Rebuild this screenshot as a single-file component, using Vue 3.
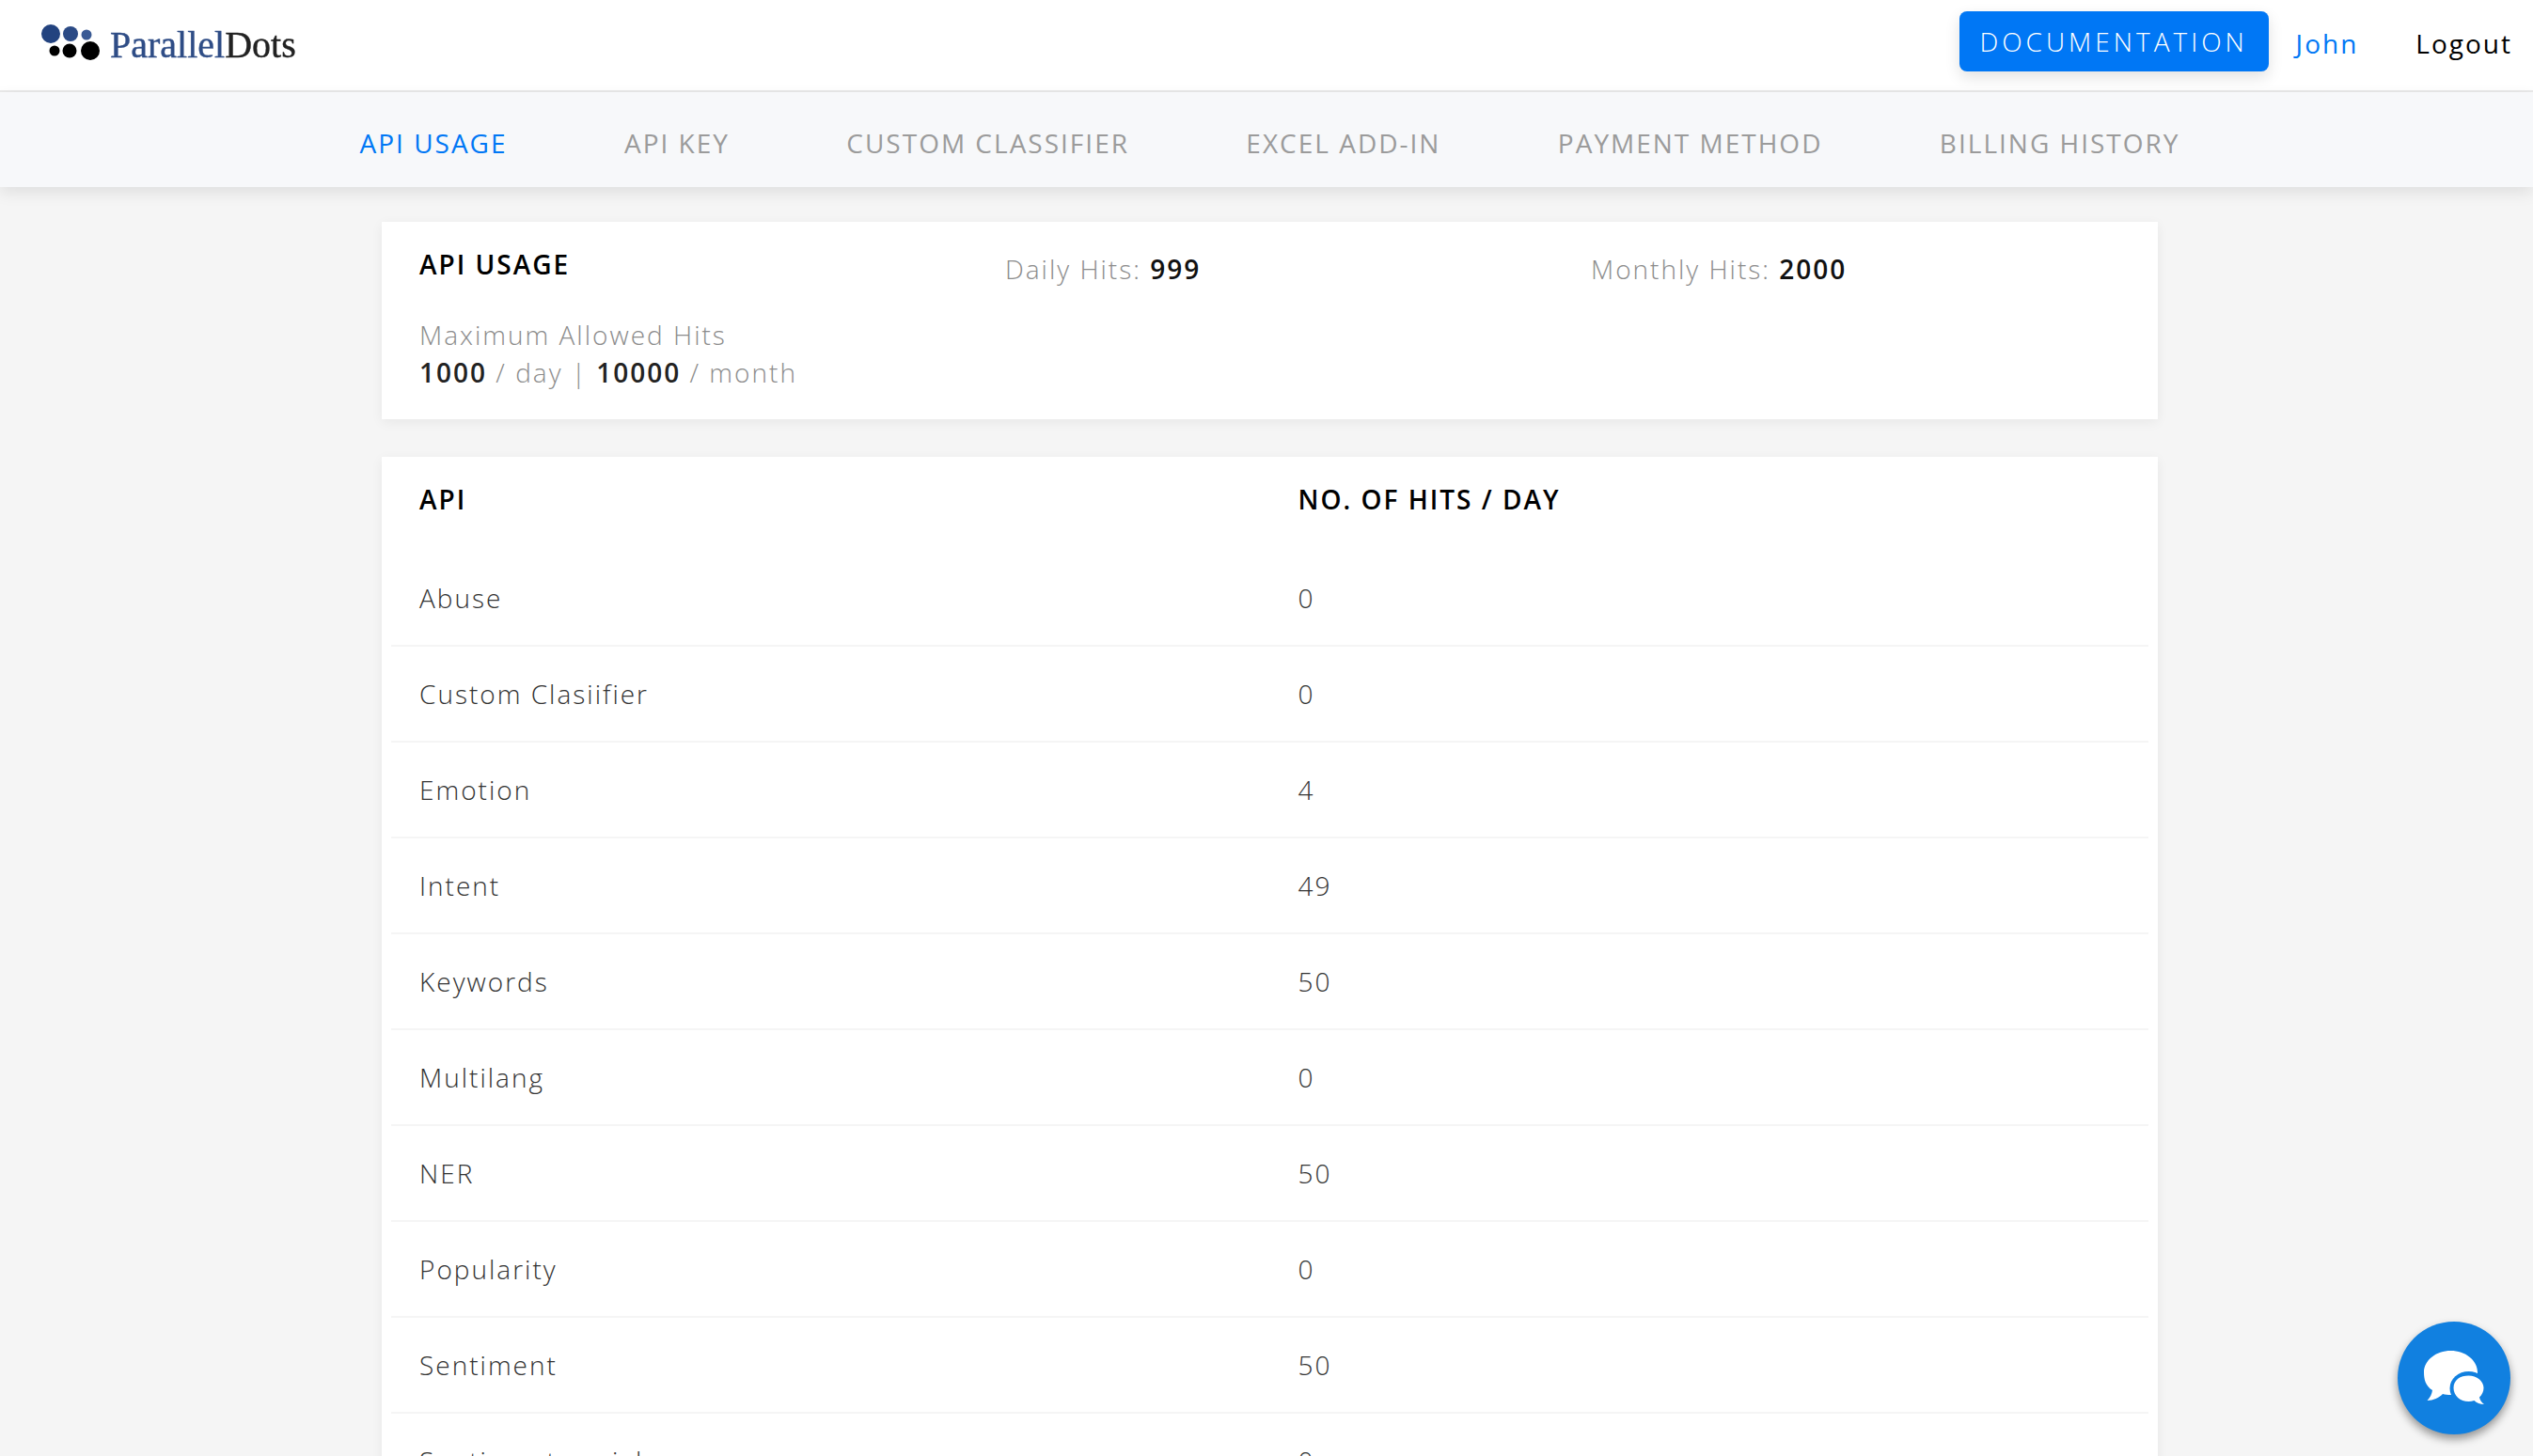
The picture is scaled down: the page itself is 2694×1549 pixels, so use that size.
<template>
  <div class="page">
    <!-- top bar -->
    <header class="topbar">
      <a class="logo">
        <svg class="logo-dots" width="72" height="46" viewBox="0 0 72 46">
          <circle cx="12" cy="11" r="10" fill="#23437f" />
          <circle cx="33" cy="11" r="8" fill="#2b4a85" />
          <circle cx="50" cy="12" r="5.5" fill="#3a5a94" />
          <circle cx="16" cy="29" r="5.5" fill="#000" />
          <circle cx="32" cy="29" r="7.5" fill="#000" />
          <circle cx="54" cy="29" r="10" fill="#000" />
        </svg>
        <span class="logo-text"><span class="logo-blue">Parallel</span>Dots</span>
      </a>
      <div class="topbar-right">
        <button class="doc-btn">DOCUMENTATION</button>
        <span class="user">John</span>
        <span class="logout">Logout</span>
      </div>
    </header>

    <!-- tabs -->
    <nav class="tabs">
      <span
        v-for="(tab, index) in tabs"
        :key="tab"
        class="tab"
        :class="{ active: index === 0 }"
      >{{ tab }}</span>
    </nav>

    <main class="content">
      <!-- usage summary -->
      <section class="card summary">
        <div class="summary-top">
          <h2 class="title">API USAGE</h2>
          <div class="hits">Daily Hits: <b>999</b></div>
          <div class="hits">Monthly Hits: <b>2000</b></div>
        </div>
        <div class="allowed">
          <div>Maximum Allowed Hits</div>
          <div><b>1000</b> / day | <b>10000</b> / month</div>
        </div>
      </section>

      <!-- hits per api -->
      <section class="card table">
        <div class="row head">
          <div class="cell">API</div>
          <div class="cell">NO. OF HITS / DAY</div>
        </div>
        <div v-for="api in apis" :key="api.name" class="row">
          <div class="cell">{{ api.name }}</div>
          <div class="cell">{{ api.hits }}</div>
        </div>
      </section>
    </main>

    <button class="chat">
      <svg width="120" height="120" viewBox="0 0 120 120">
        <path
          d="M56.500 31C72 31 85 41 85 54c0 13-13 24-28.500 24-3 0-6-.4-8.500-1-4 4-10 7-16.500 7 3-3 5-7 5.500-11C29.500 68.500 28 61 28 54c0-13 13-23 28.500-23z"
          fill="#fff"
        />
        <ellipse cx="75.500" cy="71" rx="20" ry="18" fill="#1180e0" />
        <path
          d="M75.500 57.500c8.800 0 16 5.800 16 13 0 4-1.800 7.500-4.500 10 .6 3 2.500 6 5 7.500-4 0-8-1.500-10.500-4-2 .7-4 1-6 1-8.800 0-16-6-16-14.500s7.200-13 16-13z"
          fill="#fff"
        />
      </svg>
    </button>
  </div>
</template>

<script setup>
const tabs = [
  'API USAGE',
  'API KEY',
  'CUSTOM CLASSIFIER',
  'EXCEL ADD-IN',
  'PAYMENT METHOD',
  'BILLING HISTORY'
]

const apis = [
  { name: 'Abuse', hits: 0 },
  { name: 'Custom Clasiifier', hits: 0 },
  { name: 'Emotion', hits: 4 },
  { name: 'Intent', hits: 49 },
  { name: 'Keywords', hits: 50 },
  { name: 'Multilang', hits: 0 },
  { name: 'NER', hits: 50 },
  { name: 'Popularity', hits: 0 },
  { name: 'Sentiment', hits: 50 },
  { name: 'Sentiment social', hits: 0 }
]
</script>

<style>
html,
body {
  height: 100%;
  margin: 0;
  overflow: hidden;
  background: #f5f5f5;
}
</style>

<style scoped>
.page {
  height: 100vh;
  overflow: hidden;
  font-family: 'Open Sans', 'Liberation Sans', sans-serif;
  font-weight: 300;
  font-size: 28px;
  letter-spacing: 2px;
  color: #333;
  background: #f5f5f5;
}

/* top bar */
.topbar {
  display: flex;
  align-items: center;
  justify-content: space-between;
  height: 96px;
  padding: 0 22px 0 42px;
  background: #fff;
  border-bottom: 2px solid #e9e9e9;
}

.logo {
  display: flex;
  align-items: center;
  gap: 3px;
  margin-bottom: 2px;
}

.logo-dots {
  margin-top: 2px;
}

.logo-text {
  font-family: 'Liberation Serif', serif;
  font-weight: 400;
  font-size: 40px;
  letter-spacing: 0;
  color: #222;
  -webkit-text-stroke: 0.4px currentColor;
  filter: blur(0.5px);
}

.logo-blue {
  color: #2f4d86;
}

.topbar-right {
  display: flex;
  align-items: center;
  margin-bottom: 8px;
}

.doc-btn {
  width: 329px;
  height: 64px;
  padding: 0;
  border: none;
  border-radius: 8px;
  background: #0077f5;
  color: #fff;
  font: inherit;
  letter-spacing: 4px;
  box-shadow: 0 6px 16px rgba(0, 0, 0, 0.12);
}

.user {
  margin-left: 29px;
  color: #0077f5;
  font-weight: 400;
  margin-top: 4px;
}

.logout {
  margin-left: 61px;
  color: #000;
  font-weight: 400;
  margin-top: 4px;
}

/* tabs */
.tabs {
  position: relative;
  display: flex;
  justify-content: center;
  align-items: center;
  gap: 124.4px;
  height: 101px;
  box-sizing: border-box;
  padding: 7px 0 0 7px;
  background: #f7f8fa;
  box-shadow: 0 6px 16px rgba(0, 0, 0, 0.09);
  font-weight: 400;
}

.tab {
  color: #9b9b9b;
}

.tab.active {
  color: #0077f5;
}

/* cards */
.content {
  width: 1889px;
  margin-left: 406px;
  padding-top: 37px;
}

.card {
  background: #fff;
  box-shadow: 0 3px 12px rgba(0, 0, 0, 0.06);
}

.summary {
  height: 210px;
  padding: 0 10px;
  margin-bottom: 40px;
  box-sizing: border-box;
}

.summary-top {
  display: grid;
  grid-template-columns: repeat(3, 1fr);
  padding-top: 25px;
}

.title {
  margin: 0;
  padding-left: 30px;
  font: inherit;
  font-weight: 600;
  color: #000;
  line-height: 40px;
}

.hits {
  padding-left: 30px;
  padding-top: 5px;
  line-height: 40px;
  color: #8c8c8c;
}

.hits b {
  font-weight: 600;
  color: #111;
}

.allowed {
  padding: 30px 30px 0;
  line-height: 40px;
  color: #8c8c8c;
}

.allowed b {
  font-weight: 600;
  color: #222;
}

/* table */
.table {
  padding: 0 10px;
}

.row {
  display: grid;
  grid-template-columns: 1fr 1fr;
  align-items: center;
  height: 102px;
  box-sizing: border-box;
  border-bottom: 2px solid #f5f5f5;
}

.row.head {
  height: 100px;
  padding-bottom: 10px;
  border-bottom: none;
  font-weight: 600;
  color: #000;
}

.cell {
  padding-left: 30px;
}

/* chat bubble */
.chat {
  position: fixed;
  right: 24px;
  bottom: 23px;
  width: 120px;
  height: 120px;
  padding: 0;
  border: none;
  border-radius: 50%;
  background: #1180e0;
  box-shadow: 0 5px 10px rgba(0, 0, 0, 0.4);
}

.chat svg {
  display: block;
}
</style>
